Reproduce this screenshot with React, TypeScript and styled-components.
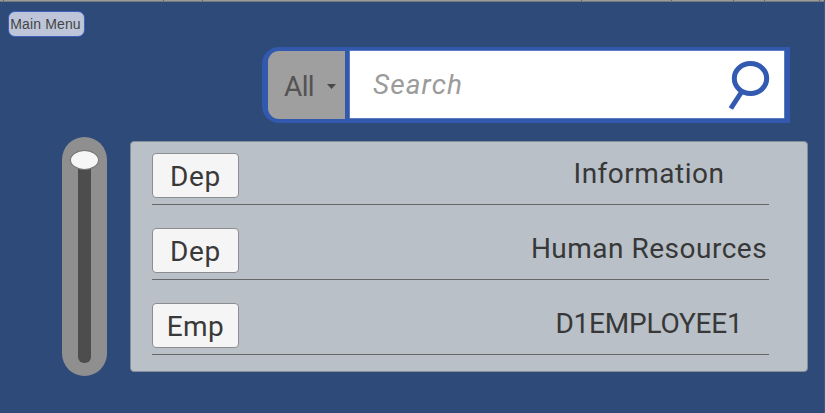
import React from "react";
import styled, { createGlobalStyle } from "styled-components";

const GlobalStyle = createGlobalStyle`
  * { box-sizing: border-box; }
  html, body, #root { margin: 0; height: 100%; overflow: hidden; }
  body { background: #2d4a79; }
`;

const Screen = styled.div`
  display: flex;
  flex-direction: column;
  width: 825px;
  height: 413px;
  background: #2d4a79;
  border-right: 1px solid #3b5988;
  font-family: Roboto, sans-serif;
  color: #373837;
`;

const TopEdge = styled.div`
  flex: none;
  height: 2px;
  background: #9b9b99;
  border-bottom: 1px solid #77797a;
  svg { display: block; }
`;

const MenuButton = styled.button`
  flex: none;
  width: 77px;
  height: 26px;
  margin: 9px 0 0 8px;
  padding: 0 2px 1px 0;
  border: 1px solid #3c5fc0;
  border-radius: 7px;
  background: #bfc5d8;
  color: #424547;
  font: 14px "Liberation Sans", sans-serif;
  letter-spacing: 0.15px;
  white-space: nowrap;
`;

const SearchBar = styled.div`
  flex: none;
  display: flex;
  width: 528px;
  height: 76px;
  margin: 10px 0 0 262px;
  padding: 4px 6px 4px 6px;
  gap: 5px;
  background: #3259ae;
  border-radius: 17px 0 0 17px;
`;

const Filter = styled.button`
  display: flex;
  align-items: center;
  gap: 13px;
  width: 77px;
  padding: 2px 0 0 16px;
  border: 0;
  border-radius: 11px 0 0 11px;
  background: #9f9f9f;
  color: #555253;
  font: 28px Roboto, sans-serif;
  letter-spacing: -0.6px;
  svg { flex: none; }
`;

const Field = styled.div`
  flex: 1;
  display: flex;
  align-items: center;
  justify-content: space-between;
  height: 67px;
  padding: 0 14px 0 23px;
  background: #fff;
  box-shadow: 0 0 0 0.5px #88a0d2;
`;

const Placeholder = styled.span`
  color: #9b9b9b;
  font-size: 28px;
  font-style: italic;
  letter-spacing: 1.1px;
`;

const Body = styled.main`
  display: flex;
  align-items: flex-start;
  gap: 23px;
  margin: 14px 0 0 62px;
`;

const Slider = styled.div`
  display: flex;
  flex-direction: column;
  align-items: center;
  width: 45px;
  height: 239px;
  padding-top: 13px;
  border-radius: 23px;
  background: #8f8f8f;
`;

const Thumb = styled.div`
  z-index: 1;
  width: 29px;
  height: 20px;
  border: 1px solid #747474;
  border-radius: 50%;
  background: #f6f6f6;
`;

const Track = styled.div`
  width: 13px;
  height: 201px;
  margin-top: -8px;
  border-radius: 0 0 6px 6px;
  background: #4d4d4d;
`;

const Panel = styled.section`
  width: 678px;
  height: 231px;
  margin-top: 4px;
  padding: 11px 38px 0 21px;
  border: 1px solid #858f9a;
  border-radius: 4px;
  background: #b9c0c8;
`;

const Row = styled.div`
  display: flex;
  justify-content: space-between;
  align-items: flex-start;
  height: 52px;
  margin-bottom: 23px;
  border-bottom: 1px solid #666868;
`;

const Kind = styled.button<{ $spacing: number }>`
  width: 87px;
  height: 45px;
  padding: 2px 0 0;
  border: 1px solid #8c8d90;
  border-radius: 4px;
  background: #f5f5f5;
  color: #393939;
  font: 28px Roboto, sans-serif;
  letter-spacing: ${(p) => p.$spacing}px;
`;

const Name = styled.span<{ $spacing: number }>`
  display: block;
  width: 240px;
  padding-top: 1px;
  text-align: center;
  white-space: nowrap;
  font-size: 28px;
  line-height: 40px;
  letter-spacing: ${(p) => p.$spacing}px;
`;

const rows = [
  { kind: "Dep", name: "Information", kindSpacing: 0.7, spacing: 0.5 },
  { kind: "Dep", name: "Human Resources", kindSpacing: 0.7, spacing: 0.5 },
  { kind: "Emp", name: "D1EMPLOYEE1", kindSpacing: 0.4, spacing: -0.2 },
];

const ticks = [3, 163, 202, 581, 671, 733, 764, 819];

export default function App() {
  return (
    <>
      <GlobalStyle />
      <Screen>
        <TopEdge>
          <svg width="824" height="1" aria-hidden="true">
            {ticks.map((x) => (
              <rect key={x} x={x} width="1" height="1" fill="#626466" />
            ))}
          </svg>
        </TopEdge>
        <MenuButton>Main Menu</MenuButton>
        <SearchBar>
          <Filter>
            All
            <svg width="9" height="5" viewBox="0 0 9 5">
              <path d="M0 0h9L4.5 5Z" fill="#494949" />
            </svg>
          </Filter>
          <Field>
            <Placeholder>Search</Placeholder>
            <svg width="42" height="50" viewBox="0 0 42 50" fill="none" stroke="#315ab0" strokeWidth="5">
              <ellipse cx="22.5" cy="18.5" rx="16.2" ry="15" />
              <path d="M13.2 32.5 2.8 48.5" />
            </svg>
          </Field>
        </SearchBar>
        <Body>
          <Slider>
            <Thumb />
            <Track />
          </Slider>
          <Panel>
            {rows.map((r) => (
              <Row key={r.name}>
                <Kind $spacing={r.kindSpacing}>{r.kind}</Kind>
                <Name $spacing={r.spacing}>{r.name}</Name>
              </Row>
            ))}
          </Panel>
        </Body>
      </Screen>
    </>
  );
}
